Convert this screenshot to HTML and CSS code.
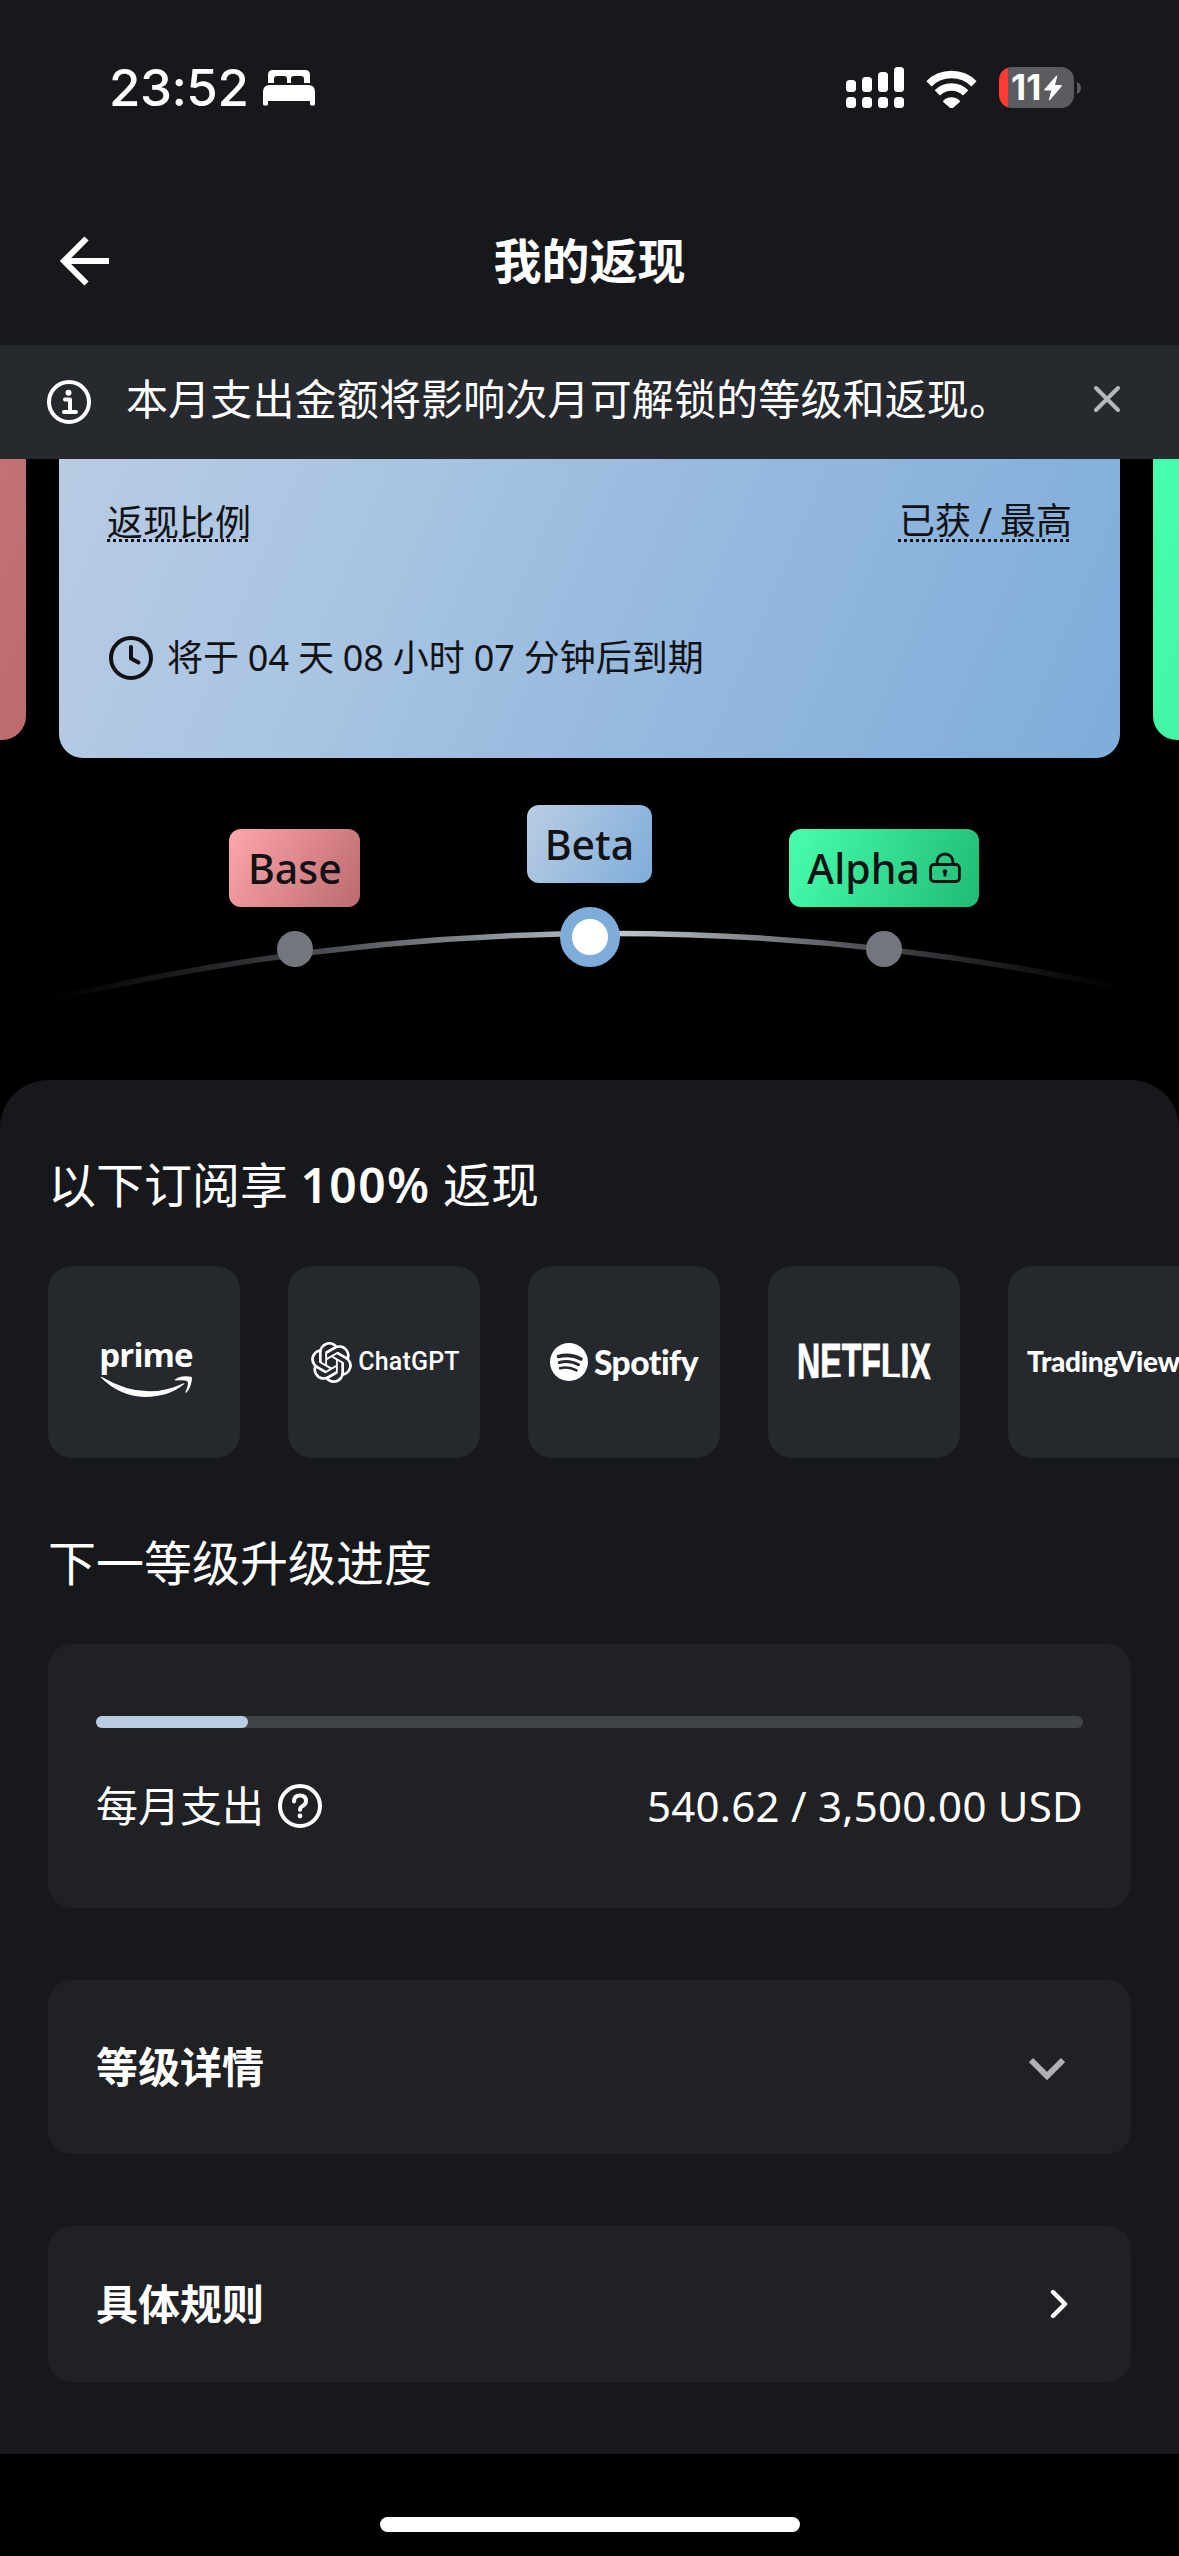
FILE: index.html
```html
<!DOCTYPE html>
<html lang="zh-CN">
<head>
<meta charset="utf-8">
<title>我的返现</title>
<link rel="stylesheet" href="styles.css">
</head>
<body>
<div class="screen">
  <div class="status-bar">
    <div class="status-left">
      <span class="clock">23:52</span>
      <svg class="bed" width="52" height="36" viewBox="0 0 52 36" fill="#fff"><path d="M5 13V5q0-5 5-5h32q5 0 5 5v8h-6V9q0-3-3-3h-7q-3 0-3 3v4h-4V9q0-3-3-3h-7q-3 0-3 3v4z"/><path d="M0 22q0-7 7-7h38q7 0 7 7v12q0 1.500-1.500 1.500h-2q-1.500 0-1.500-1.500v-3H5v3q0 1.500-1.500 1.500h-2Q0 35.500 0 34z"/></svg>
    </div>
    <div class="status-right">
      <svg width="58" height="41" viewBox="0 0 58 41" fill="#fff"><rect y="13" width="10" height="12" rx="3.500"/><rect x="16" y="10" width="10" height="15" rx="3.500"/><rect x="32" y="5" width="10" height="20" rx="3.500"/><rect x="48" width="10" height="25" rx="3.500"/><rect y="30" width="10" height="11" rx="3.500"/><rect x="16" y="30" width="10" height="11" rx="3.500"/><rect x="32" y="30" width="10" height="11" rx="3.500"/><rect x="48" y="30" width="10" height="11" rx="3.500"/></svg>
      <svg class="wifi" width="51" height="38" viewBox="0 0 51 38"><g fill="none" stroke="#fff" stroke-width="7.500"><path d="M3 13.800A32 32 0 0 1 48 13.800"/><path d="M11.300 22.800A20 20 0 0 1 39.700 22.800"/></g><path d="M17.500 30.500a11.500 11.500 0 0 1 16 0q.8.900 0 1.700L26.500 38.300q-1 .8-2 0L17.500 32.200q-.8-.8 0-1.700z" fill="#fff"/></svg>
      <div class="battery"><span>11</span><svg width="18" height="26" viewBox="0 0 18 26" fill="#fff"><path d="M12.500.5Q13.500 0 13.200 1.500L11 10h6q1.200.2.500 1.500L6 25q-1.200 1-1-.5L7.300 15.500H1Q-.2 15.200.6 14z"/></svg></div>
      <svg class="nub" width="5" height="12" viewBox="0 0 5 12" fill="#5b5c5f"><path d="M0 0a6.500 6.500 0 0 1 0 12z"/></svg>
    </div>
  </div>

  <header class="nav">
    <svg width="50" height="50" viewBox="0 0 50 50" fill="none" stroke="#fff" stroke-width="6"><path d="M49 25H5M26.500 2.500 4 25l22.500 22.500"/></svg>
    <h1>我的返现</h1>
  </header>

  <div class="notice">
    <svg width="44" height="44" viewBox="0 0 44 44" fill="none" stroke="#fff" stroke-width="4"><circle cx="22" cy="22" r="20"/><path d="M18 19.500h5V31M17 32h12" stroke-linecap="round" stroke-linejoin="round"/><circle cx="21.500" cy="12.700" r="3" fill="#fff" stroke="none"/></svg>
    <p>本月支出金额将影响次月可解锁的等级和返现。</p>
    <svg class="close" width="28" height="28" viewBox="0 0 28 28" fill="none" stroke="#b5b8bd" stroke-width="4" stroke-linecap="round"><path d="M3 3l22 22M25 3 3 25"/></svg>
  </div>

  <div class="carousel">
    <div class="tier-card side red"></div>
    <div class="tier-card main">
      <div class="card-row"><span class="term">返现比例</span><span class="term right">已获 / 最高</span></div>
      <div class="expiry">
        <svg width="44" height="44" viewBox="0 0 44 44" fill="none" stroke="#111215" stroke-width="4"><circle cx="22" cy="22" r="20"/><path d="M22 11v11.500l7.500 4" stroke-linecap="round" stroke-linejoin="round"/></svg>
        <span>将于 04 天 08 小时 07 分钟后到期</span>
      </div>
    </div>
    <div class="tier-card side green"></div>
  </div>

  <div class="tiers">
    <svg class="arc" width="1179" height="322" viewBox="0 758 1179 322" fill="none">
      <defs><linearGradient id="fade" gradientUnits="userSpaceOnUse" x1="50" y1="0" x2="1125" y2="0"><stop offset="0" stop-color="#26292c" stop-opacity="0"/><stop offset=".22" stop-color="#3b3e42"/><stop offset=".53" stop-color="#bfc6cc"/><stop offset=".77" stop-color="#46484c"/><stop offset="1" stop-color="#26292c" stop-opacity="0"/></linearGradient></defs>
      <path d="M50 999.500Q591 872.400 1132 990" stroke="url(#fade)" stroke-width="5.500"/>
    </svg>
    <div class="tier"><span class="chip base">Base</span><i class="dot"></i></div>
    <div class="tier active"><span class="chip beta">Beta</span><i class="dot"></i></div>
    <div class="tier"><span class="chip alpha">Alpha<svg width="32" height="31" viewBox="0 0 32 31" fill="none" stroke="#111215" stroke-width="2.800"><rect x="1.600" y="12.500" width="28.800" height="17" rx="3.500"/><path d="M8 12.500V10a8 8 0 0 1 16 0v2.500"/><circle cx="16" cy="19.500" r="2.200" fill="#111215" stroke="none"/><path d="M16 20v4.500"/></svg></span><i class="dot"></i></div>
  </div>

  <main class="sheet">
    <h2>以下订阅享 <strong>100%</strong> 返现</h2>
    <div class="brands">
      <div class="brand prime"><span>prime</span>
        <svg width="92" height="21" viewBox="0 0 92 21" fill="#fff"><path d="M1 1.500Q0 .3 2 1 44 26 83 7.500q2-.7 1.200.6Q69 21 45 21 19 20 1 1.500z"/><path d="M75 3.500Q81-.8 91 .8q1 .2 1 1.500Q91.500 11 86.500 16.500q-1.500 1-1-.7Q89 8 87.500 5.500 85 3.500 76 4.500q-2 0-1-1z"/></svg>
      </div>
      <div class="brand chatgpt">
        <svg width="41" height="41" viewBox="0 0 24 24" fill="#fff"><path d="M22.2819 9.8211a5.9847 5.9847 0 0 0-.5157-4.9108 6.0462 6.0462 0 0 0-6.5098-2.9A6.0651 6.0651 0 0 0 4.9807 4.1818a5.9847 5.9847 0 0 0-3.9977 2.9 6.0462 6.0462 0 0 0 .7427 7.0966 5.98 5.98 0 0 0 .511 4.9107 6.051 6.051 0 0 0 6.5146 2.9001A5.9847 5.9847 0 0 0 13.2599 24a6.0557 6.0557 0 0 0 5.7718-4.2058 5.9894 5.9894 0 0 0 3.9977-2.9001 6.0557 6.0557 0 0 0-.7475-7.0729zm-9.022 12.6081a4.4755 4.4755 0 0 1-2.8764-1.0408l.1419-.0804 4.7783-2.7582a.7948.7948 0 0 0 .3927-.6813v-6.7369l2.02 1.1686a.071.071 0 0 1 .038.052v5.5826a4.504 4.504 0 0 1-4.4945 4.4944zm-9.6607-4.1254a4.4708 4.4708 0 0 1-.5346-3.0137l.142.0852 4.783 2.7582a.7712.7712 0 0 0 .7806 0l5.8428-3.3685v2.3324a.0804.0804 0 0 1-.0332.0615L9.74 19.9502a4.4992 4.4992 0 0 1-6.1408-1.6464zM2.3408 7.8956a4.485 4.485 0 0 1 2.3655-1.9728V11.6a.7664.7664 0 0 0 .3879.6765l5.8144 3.3543-2.0201 1.1685a.0757.0757 0 0 1-.071 0l-4.8303-2.7865A4.504 4.504 0 0 1 2.3408 7.872zm16.5963 3.8558L13.1038 8.364 15.1192 7.2a.0757.0757 0 0 1 .071 0l4.8303 2.7913a4.4944 4.4944 0 0 1-.6765 8.1042v-5.6772a.79.79 0 0 0-.407-.667zm2.0107-3.0231l-.142-.0852-4.7735-2.7818a.7759.7759 0 0 0-.7854 0L9.409 9.2297V6.8974a.0662.0662 0 0 1 .0284-.0615l4.8303-2.7866a4.4992 4.4992 0 0 1 6.6802 4.66zM8.3065 12.863l-2.02-1.1638a.0804.0804 0 0 1-.038-.0567V6.0742a4.4992 4.4992 0 0 1 7.3757-3.4537l-.142.0805L8.704 5.459a.7948.7948 0 0 0-.3927.6813zm1.0976-2.3654l2.602-1.4998 2.6069 1.4998v2.9994l-2.5974 1.4997-2.6067-1.4997Z"/></svg>
        <span>ChatGPT</span>
      </div>
      <div class="brand spotify">
        <svg width="38" height="38" viewBox="0 0 38 38" fill="none" stroke="#25282d" stroke-linecap="round"><circle cx="19" cy="19" r="19" fill="#fff" stroke="none"/><path d="M8.500 13.500q12-3.200 22.500 2.500" stroke-width="3.600"/><path d="M9.300 19.500q10.500-2.800 19.200 2.300" stroke-width="3"/><path d="M10 25.200q8.700-2.200 16.500 2.200" stroke-width="2.500"/></svg>
        <span>Spotify</span>
      </div>
      <div class="brand">
        <svg width="140" height="80" viewBox="-3 -20 140 80"><text class="netflix" x="0" y="37.500" textLength="134" lengthAdjust="spacingAndGlyphs">NETFLIX</text><ellipse cx="67" cy="44" rx="90" ry="9.500" fill="#25282d"/></svg>
      </div>
      <div class="brand tradingview"><span>TradingView</span></div>
    </div>

    <h2 class="second">下一等级升级进度</h2>
    <section class="panel progress">
      <div class="track"><div class="fill" style="width:15.45%"></div></div>
      <div class="progress-row">
        <span class="label">每月支出<svg width="44" height="44" viewBox="0 0 44 44" fill="none" stroke="#fff" stroke-width="4"><circle cx="22" cy="22" r="20"/><path d="M16 17.500q0-6 6-6t6 5.500q0 3-3 4.700-3 1.500-3 4" stroke-linecap="round"/><circle cx="22" cy="32" r="2.400" fill="#fff" stroke="none"/></svg></span>
        <span class="amount">540.62 / 3,500.00 USD</span>
      </div>
    </section>
    <section class="panel link details"><span>等级详情</span>
      <svg width="36" height="24" viewBox="0 0 36 24" fill="none" stroke="#b0b1b4" stroke-width="6"><path d="M2 3l16 16L34 3"/></svg>
    </section>
    <section class="panel link rules"><span>具体规则</span>
      <svg width="18" height="30" viewBox="0 0 18 30" fill="none" stroke="#fff" stroke-width="4.400" stroke-linecap="round" stroke-linejoin="round"><path d="M3 3l12 12L3 27"/></svg>
    </section>
  </main>
  <div class="home"><i></i></div>
</div>
</body>
</html>
```

FILE: styles.css
```css
* { box-sizing: border-box; }
body { margin: 0; background: #000; }
svg { display: block; flex: none; }
h1, h2, p { margin: 0; }
.screen {
  width: 1179px; height: 2556px; overflow: hidden;
  display: flex; flex-direction: column;
  background: #000; color: #fff;
  font-family: "Noto Sans", "Noto Sans CJK SC", sans-serif;
}
.status-bar {
  height: 176px; flex: none; background: #17181c;
  display: flex; justify-content: space-between;
  padding: 67px 97px 0 109px;
}
.status-left, .status-right { display: flex; height: 41px; align-items: center; }
.clock { font: 550 51px/41px Inter, sans-serif; letter-spacing: -0.5px; }
.bed { margin: 1px 0 0 15px; }
.wifi { margin: 2px 22px 0; }
.battery {
  width: 75px; height: 41px; border-radius: 13px;
  display: flex; align-items: center; padding-left: 12px; gap: 2px;
  background: linear-gradient(90deg, #ff3a30 8.500px, #5b5c5f 8.500px);
  font: 700 35px/41px Inter, sans-serif; letter-spacing: 0.2px;
}
.nub { margin-left: 3px; }
.nav {
  height: 169px; flex: none; background: #17181c;
  display: grid; grid-template-columns: 50px 1fr 50px; align-items: center;
  padding: 0 60px 0;
}
.nav h1 { text-align: center; font-size: 48px; line-height: 64px; font-weight: 700; padding-top: 1px; }
.notice {
  height: 114px; flex: none; background: #26292e;
  display: flex; align-items: center; padding: 0 58px 0 47px;
  font-size: 42px; line-height: 60px;
}
.notice p { margin-left: 35px; flex: 1; padding-bottom: 7px; white-space: nowrap; letter-spacing: 0.15px; }
.notice .close { margin-bottom: 6px; }
.carousel {
  height: 299px; flex: none; overflow: hidden;
  display: flex; justify-content: center; gap: 33px;
}
.tier-card { flex: none; border-radius: 0 0 24px 24px; }
.side { width: 1025px; height: 281px; }
.red { background: linear-gradient(115deg, #fba3aa, #bb6a6e); }
.green { background: linear-gradient(115deg, #47ffac, #20bb74); }
.main {
  width: 1061px; height: 299px; padding: 37px 48px 0 48px; color: #111215;
  background: linear-gradient(113deg, #b9cbe3, #a9c5e2 28%, #98badf 55%, #7eadda);
  font-size: 36px; line-height: 54px;
}
.card-row { display: flex; justify-content: space-between; }
.term {
  text-decoration: underline dotted #111215 2.500px;
  text-underline-offset: 3px; text-decoration-skip-ink: none;
}
.term.right { margin-top: -2px; text-underline-offset: 5px; word-spacing: -1.5px; }
.expiry { display: flex; align-items: center; gap: 14px; margin: 81px 0 0 2px; white-space: nowrap; word-spacing: -0.5px; }
.tiers {
  position: relative; height: 322px; flex: none;
  display: grid; grid-template-columns: repeat(3, 294.600px); justify-content: center; align-items: start;
}
.arc { position: absolute; left: 0; top: 0; }
.tier { position: relative; display: flex; flex-direction: column; align-items: center; gap: 24px; padding-top: 71px; }
.active { padding-top: 47px; }
.chip {
  height: 78px; border-radius: 12px; padding: 0 19px; color: #111215;
  display: flex; align-items: center; justify-content: center; gap: 9px;
  font-size: 41px; line-height: 76px; font-weight: 500; padding-bottom: 1px;
}
.base { width: 131px; background: linear-gradient(120deg, #fea6ac, #bb6a6e); }
.beta { width: 125px; background: linear-gradient(120deg, #bacde3, #7eadda); }
.alpha { width: 190px; background: linear-gradient(110deg, #47ffac, #20bb74); }
.dot { width: 36px; height: 36px; border-radius: 50%; background: #73767c; }
.active .dot { width: 60px; height: 60px; border: 12px solid #7eadda; background: #fff; }
.sheet {
  height: 1374px; flex: none; background: #17181c;
  border-radius: 48px 48px 0 0; padding: 69px 48px 0;
}
h2 { font-size: 48px; line-height: 72px; font-weight: 400; height: 72px; white-space: nowrap; }
h2 strong { font-weight: 600; letter-spacing: 1.4px; }
.brands { display: flex; gap: 48px; margin: 45px -48px 0 0; overflow: hidden; }
.brand {
  width: 192px; height: 192px; flex: none; border-radius: 24px; background: #25282d;
  display: flex; align-items: center; justify-content: center; white-space: nowrap;
}
.prime { flex-direction: column; padding: 5px 0 0 4px; font: 700 33px/45px "Open Sans", sans-serif; }
.prime span { letter-spacing: -0.9px; }
.prime svg { margin-top: -1px; }
.chatgpt { gap: 6px; font: 500 25px/30px Roboto, sans-serif; padding-left: 3px; }
.chatgpt span { letter-spacing: 0.15px; }
.spotify { gap: 6px; font: 900 33.500px/40px Lato, sans-serif; letter-spacing: -0.5px; }
.netflix { font: 700 51px "Liberation Sans", sans-serif; fill: #fff; stroke: #fff; stroke-width: 0.9px; }
.tradingview { font: 900 28px/40px Lato, sans-serif; justify-content: flex-start; padding: 0 0 2px 19px; letter-spacing: -0.3px; }
.second { margin-top: 69px; }
.panel { background: #202124; border-radius: 24px; font-size: 42px; }
.progress { margin-top: 45px; height: 264px; padding: 72px 48px 0; }
.track { height: 12px; border-radius: 6px; background: #404347; }
.fill { height: 12px; border-radius: 6px; background: #bacde3; }
.progress-row { display: flex; justify-content: space-between; align-items: center; margin-top: 46px; line-height: 64px; }
.label { display: flex; align-items: center; gap: 14px; }
.amount { letter-spacing: 0.25px; }
.link { display: flex; justify-content: space-between; align-items: center; font-weight: 700; padding-left: 48px; line-height: 60px; }
.details { margin-top: 72px; height: 174px; padding-right: 66px; }
.rules { margin-top: 72px; height: 156px; padding-right: 63px; }
.details svg { margin-top: 3px; }
.home { flex: 1; display: flex; justify-content: center; padding-top: 63px; }
.home i { width: 420px; height: 15px; border-radius: 8px; background: #fff; }
```
